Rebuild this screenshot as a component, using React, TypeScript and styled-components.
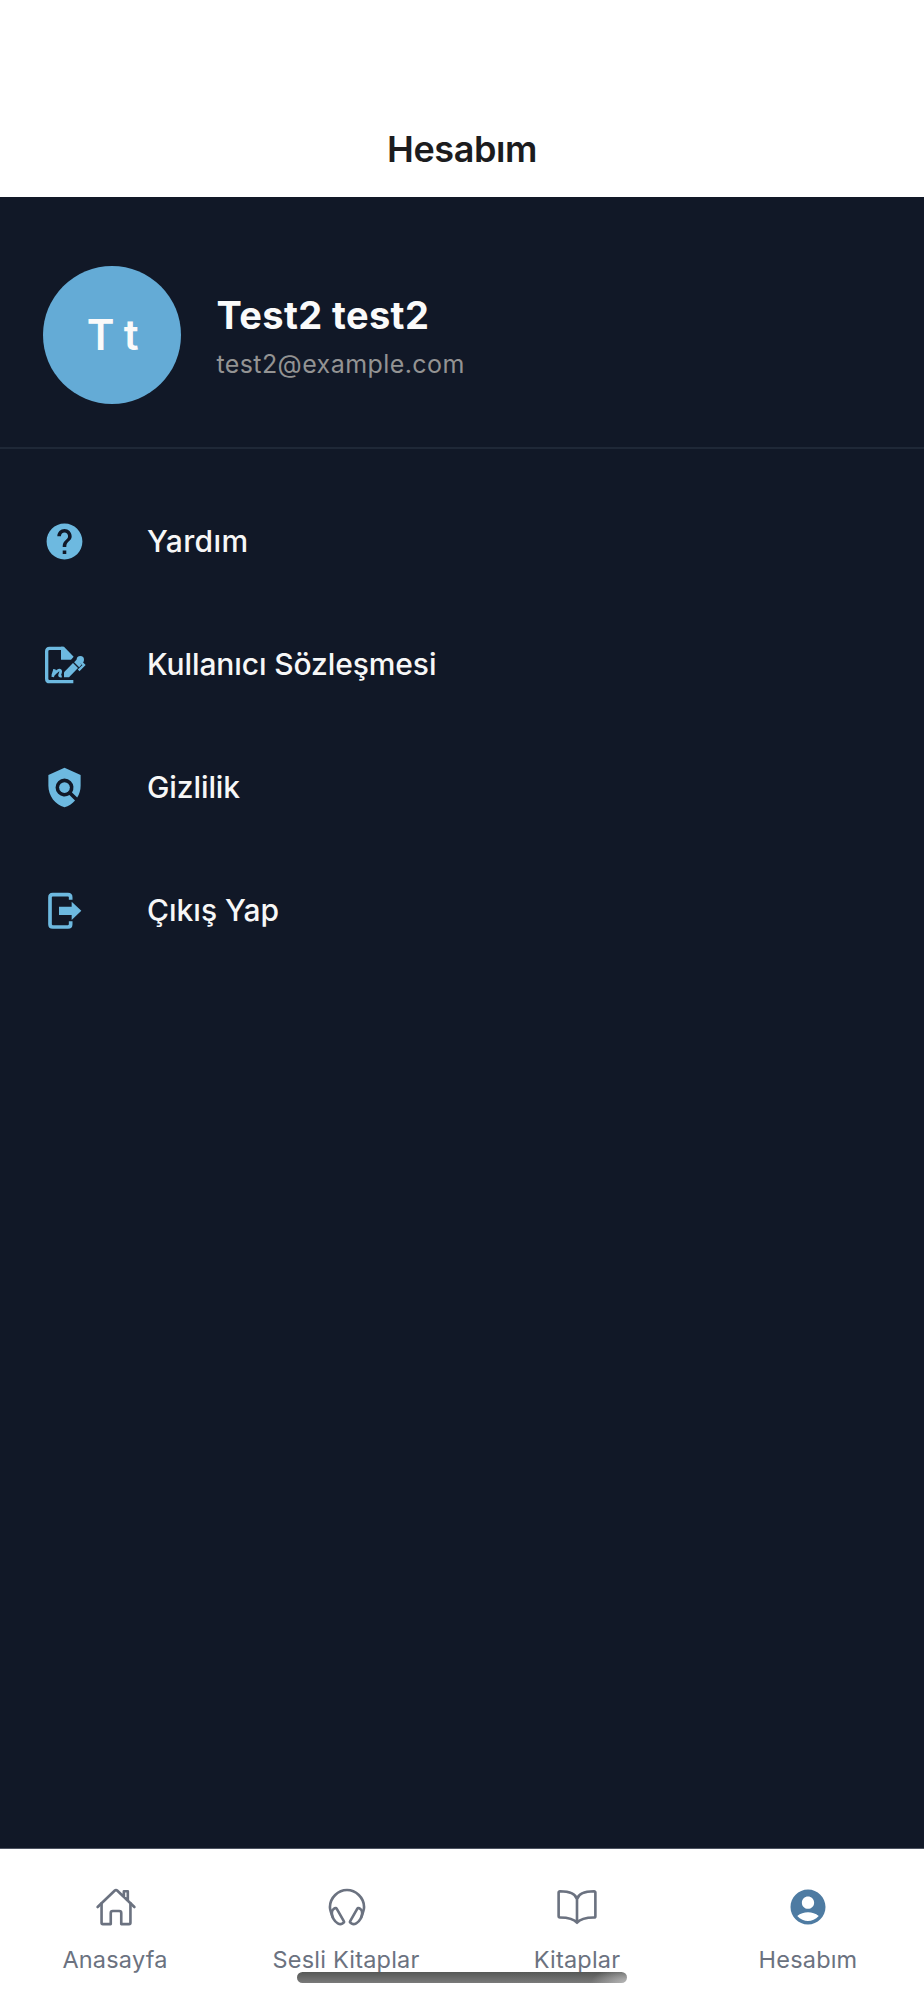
import React from "react";
import styled, { createGlobalStyle } from "styled-components";
import { MdHelp, MdPolicy, MdAccountCircle } from "react-icons/md";
import { IoHomeOutline, IoHeadsetOutline, IoBookOutline } from "react-icons/io5";

const GlobalStyle = createGlobalStyle`
  * { box-sizing: border-box; }
  body { margin: 0; background: #fff; font-family: Inter, "Liberation Sans", sans-serif; }
`;

const Screen = styled.div`
  width: 924px;
  height: 2000px;
  display: flex;
  flex-direction: column;
  background: #111827;
  overflow: hidden;
`;

const Header = styled.header`
  height: 197px;
  flex: none;
  padding-top: 127px;
  background: #fff;
  text-align: center;
`;

const Title = styled.h1`
  margin: 0;
  font-size: 36px;
  line-height: 44px;
  font-weight: 600;
  letter-spacing: -0.4px;
  color: #1c1c1e;
`;

const Profile = styled.section`
  height: 252px;
  flex: none;
  display: flex;
  padding: 69px 43px 0 43.4px;
  gap: 35px;
  border-bottom: 2px solid #1f2837;
`;

const Avatar = styled.div`
  width: 138px;
  height: 138px;
  border-radius: 50%;
  background: #64abd6;
  color: #fafafa;
  display: flex;
  align-items: center;
  justify-content: center;
  padding-bottom: 1px;
  font-size: 42px;
  font-weight: 600;
  letter-spacing: -0.6px;
`;

const Identity = styled.div`
  padding-top: 25px;
`;

const Name = styled.div`
  font-size: 38px;
  line-height: 48px;
  font-weight: 700;
  letter-spacing: 0.4px;
  color: #fafafa;
`;

const Email = styled.div`
  font-size: 25px;
  line-height: 34px;
  margin-top: 8px;
  letter-spacing: 0.42px;
  color: #939393;
`;

const Menu = styled.nav`
  flex: 1;
  padding: 31px 43px 0;
`;

const MenuRow = styled.a`
  height: 123px;
  display: flex;
  align-items: center;
  gap: 61px;
  color: #f7f7f7;
`;

const MenuIcon = styled.span`
  width: 43px;
  height: 43px;
  display: flex;
  color: #6db9e0;
`;

const MenuLabel = styled.span<{ $spacing: number }>`
  font-size: 30px;
  font-weight: 500;
  line-height: 40px;
  padding-bottom: 1px;
  letter-spacing: ${(p) => p.$spacing}px;
`;

const TabBar = styled.nav`
  position: relative;
  height: 152px;
  flex: none;
  display: grid;
  grid-template-columns: repeat(4, 1fr);
  background: #fff;
  border-top: 1px solid #4d5361;
`;

const Tab = styled.a<{ $active?: boolean; $nudge: number }>`
  display: flex;
  flex-direction: column;
  align-items: center;
  padding-top: 37px;
  color: #6b7280;
  svg {
    color: ${(p) => (p.$active ? "#4e7ba2" : "#6b7280")};
    margin-right: ${(p) => p.$nudge}px;
  }
`;

const TabLabel = styled.span`
  margin-top: 17px;
  margin-right: 1px;
  font-size: 23.5px;
  line-height: 30px;
  letter-spacing: 0.2px;
`;

const HomeIndicator = styled.div`
  position: absolute;
  left: 297px;
  top: 123px;
  width: 330px;
  height: 11px;
  border-radius: 6px;
  background: radial-gradient(ellipse 36px 16px at 100% 100%, #b8b8b8, #b4b4b400),
    linear-gradient(#565856, #7a7a7a);
`;

const ContractIcon = () => (
  <svg width="43" height="43" viewBox="0 0 129 129" fill="none" stroke="currentColor" overflow="visible">
    <path d="M91 116H20Q11 116 11 107V25Q11 16 20 16H61" strokeWidth="10" />
    <path d="M54 11H63L92 41L84 50H54Z" fill="currentColor" stroke="none" />
    <path d="M63 88L90 60L105 75L78 103H63Z" fill="currentColor" stroke="none" />
    <path d="M97 54L112 69" strokeWidth="12" />
    <path d="M92 58L108 74" strokeWidth="3" stroke="#111827" />
    <circle cx="112" cy="50" r="11" fill="currentColor" stroke="none" />
    <path d="M115 58L123 66L107 82" strokeWidth="7" />
    <path d="M29 102L35 79L29 98Q47 77 52 82Q55 85 50 95Q48 101 56 99" strokeWidth="8" />
  </svg>
);

const LogoutIcon = () => (
  <svg width="43" height="43" viewBox="0 0 129 129" fill="none" stroke="currentColor">
    <path d="M83 32V25Q83 17 75 17H29Q21 17 21 25V106Q21 114 29 114H75Q83 114 83 106V97" strokeWidth="11" />
    <path d="M48 53H86V38L115 65.5L86 93V78H48Z" fill="currentColor" stroke="none" />
  </svg>
);

const menu = [
  { label: "Yardım", icon: <MdHelp size={43} />, spacing: 0.35 },
  { label: "Kullanıcı Sözleşmesi", icon: <ContractIcon />, spacing: -0.1 },
  { label: "Gizlilik", icon: <MdPolicy size={43} />, spacing: -0.1 },
  { label: "Çıkış Yap", icon: <LogoutIcon />, spacing: 0 },
];

const tabs = [
  { label: "Anasayfa", icon: <IoHomeOutline size={42} />, nudge: 0 },
  { label: "Sesli Kitaplar", icon: <IoHeadsetOutline size={42} />, nudge: 0 },
  { label: "Kitaplar", icon: <IoBookOutline size={42} />, nudge: 2 },
  { label: "Hesabım", icon: <MdAccountCircle size={42} />, nudge: 2, active: true },
];

export default function App() {
  return (
    <Screen>
      <GlobalStyle />
      <Header>
        <Title>Hesabım</Title>
      </Header>
      <Profile>
        <Avatar>T t</Avatar>
        <Identity>
          <Name>Test2 test2</Name>
          <Email>test2@example.com</Email>
        </Identity>
      </Profile>
      <Menu>
        {menu.map((m) => (
          <MenuRow key={m.label}>
            <MenuIcon>{m.icon}</MenuIcon>
            <MenuLabel $spacing={m.spacing}>{m.label}</MenuLabel>
          </MenuRow>
        ))}
      </Menu>
      <TabBar>
        {tabs.map((t) => (
          <Tab key={t.label} $active={t.active} $nudge={t.nudge}>
            {t.icon}
            <TabLabel>{t.label}</TabLabel>
          </Tab>
        ))}
        <HomeIndicator />
      </TabBar>
    </Screen>
  );
}
